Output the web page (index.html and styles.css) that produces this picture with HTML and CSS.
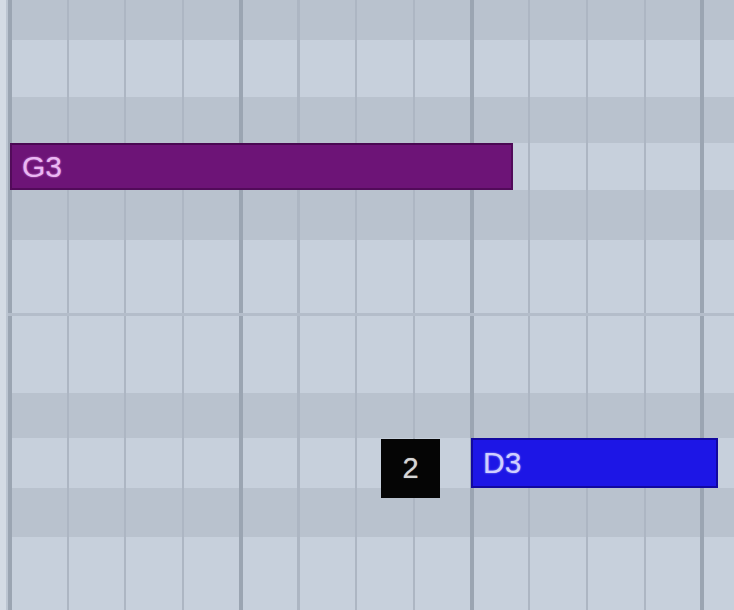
FILE: index.html
```html
<!DOCTYPE html>
<html>
<head>
<meta charset="utf-8">
<link rel="stylesheet" href="styles.css">
</head>
<body>
<div class="roll">
  <div class="edge"></div>
  <div class="lanes">
    <div class="row black h40"></div>
    <div class="row white h57"></div>
    <div class="row black h46"></div>
    <div class="row white h47">
      <div class="note note-g3">G3</div>
    </div>
    <div class="row black h50"></div>
    <div class="row white h76 split"></div>
    <div class="row white h77"></div>
    <div class="row black h45"></div>
    <div class="row white h50 d3row">
      <div class="badge">2</div>
      <div class="note note-d3">D3</div>
    </div>
    <div class="row black h49"></div>
    <div class="row white h73"></div>
  </div>
</div>
</body>
</html>
```
FILE: styles.css
```css
html, body {
  margin: 0;
  padding: 0;
  background: #c7d0dc;
}
.roll {
  width: 734px;
  height: 610px;
  overflow: hidden;
  display: flex;
  font-family: "Liberation Sans", Arial, sans-serif;
}
.edge {
  width: 8px;
  flex: none;
  background: linear-gradient(90deg, #d4dbe4 0 6px, #bcc5d1 6px 8px);
}
.lanes {
  flex: 1;
  display: flex;
  flex-direction: column;
}
.row {
  --grid:
    repeating-linear-gradient(90deg, #9ba5b2 0 4px, transparent 4px 230.8px),
    repeating-linear-gradient(90deg, transparent 0 1px, #adb6c3 1px 3px, transparent 3px 57.7px);
  display: flex;
  align-items: stretch;
  flex: none;
}
.row.white { background: var(--grid), #c7d0dc; }
.row.black { background: var(--grid), #b9c2ce; }
.row.split {
  background:
    linear-gradient(0deg, #b4bdca 0 3px, transparent 3px),
    var(--grid), #c7d0dc;
}
.h40 { height: 40px; }
.h45 { height: 45px; }
.h46 { height: 46px; }
.h47 { height: 47px; }
.h49 { height: 49px; }
.h50 { height: 50px; }
.h57 { height: 57px; }
.h73 { height: 73px; }
.h76 { height: 76px; }
.h77 { height: 77px; }

.note {
  box-sizing: border-box;
  display: flex;
  align-items: center;
  padding-left: 10px;
  font-size: 30px;
}
.note-g3 {
  margin-left: 2px;
  width: 503px;
  background: #6d1477;
  border: 2px solid #520b5a;
  border-top-color: #4a0852;
  color: #eab8f2;
  text-shadow: 0 0 2px rgba(240, 170, 250, 0.8);
}
.d3row {
  position: relative;
}
.note-d3 {
  margin-left: 463px;
  width: 247px;
  background: #1d16e6;
  border: 2px solid #1208a0;
  color: #cfcfff;
  text-shadow: 0 0 2px rgba(200, 200, 255, 0.8);
}
.badge {
  position: absolute;
  left: 373px;
  top: 1px;
  width: 59px;
  height: 59px;
  background: #050505;
  color: #d6d6d6;
  font-size: 29px;
  display: flex;
  align-items: center;
  justify-content: center;
  text-shadow: 0 0 1px rgba(255, 255, 255, 0.6);
}
```
